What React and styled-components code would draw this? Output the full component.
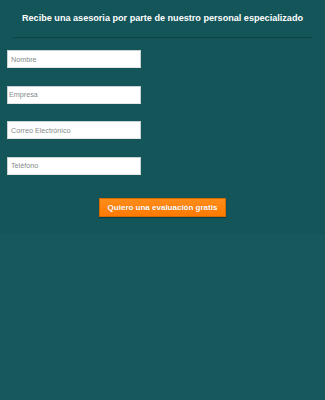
import React from "react";
import styled, { createGlobalStyle } from "styled-components";

const Global = createGlobalStyle`
  html, body {
    margin: 0;
    padding: 0;
    background: #16585e;
    height: 100%;
  }
  #root {
    min-height: 400px;
    background: #16585e;
  }
`;

const Section = styled.section`
  background: #14555a;
  padding: 13px 0 17px;
  font-family: "Liberation Sans", Arial, sans-serif;
`;

const Title = styled.h2`
  margin: 0;
  color: #ffffff;
  font-size: 9.1px;
  font-weight: bold;
  text-align: center;
  line-height: 11px;
`;

const Rule = styled.hr`
  border: 0;
  height: 1px;
  background: #0d4348;
  margin: 13px 13px 12px 13px;
`;

const Form = styled.form`
  display: flex;
  flex-direction: column;
  padding: 0 7px;
`;

const Field = styled.input`
  box-sizing: border-box;
  width: 134px;
  height: 18px;
  margin-bottom: 17.5px;
  padding: 0 ${(p) => (p.$tight ? "1px" : "3px")};
  border: 1px solid #c9d1d2;
  border-bottom-color: #e5e5e5;
  background: #ffffff;
  font-family: "Liberation Sans", Arial, sans-serif;
  font-size: 7.2px;
  color: #333;
  outline: none;

  &::placeholder {
    color: #848b8c;
  }
`;

const Actions = styled.div`
  display: flex;
  justify-content: center;
  padding-top: 6px;
`;

const Button = styled.button`
  width: 127px;
  height: 19px;
  border: 1px solid #d46a00;
  background: linear-gradient(#ff8c1a, #ff7a00);
  color: #ffffff;
  font-family: "Liberation Sans", Arial, sans-serif;
  font-weight: bold;
  font-size: 8px;
  padding: 0;
  cursor: pointer;
  text-shadow: 0 0 1px rgba(0, 0, 0, 0.2);
  box-shadow: 0 1px 1px rgba(0, 0, 0, 0.25);
`;

const fields = [
  { label: "Nombre" },
  { label: "Empresa", tight: true },
  { label: "Correo Electrónico" },
  { label: "Teléfono" },
];

export default function App() {
  return (
    <>
      <Global />
      <Section>
        <Title>Recibe una asesoria por parte de nuestro personal especializado</Title>
        <Rule />
        <Form onSubmit={(e) => e.preventDefault()}>
          {fields.map((f) => (
            <Field key={f.label} placeholder={f.label} $tight={f.tight} />
          ))}
          <Actions>
            <Button type="submit">Quiero una evaluación gratis</Button>
          </Actions>
        </Form>
      </Section>
    </>
  );
}
